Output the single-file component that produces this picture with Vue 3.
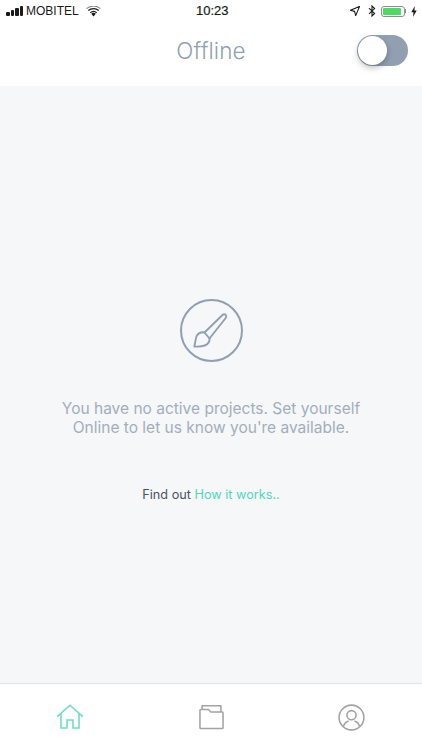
<template>
  <div class="screen">
    <header class="top">
      <div class="status-bar">
        <div class="status-left">
          <span class="signal"><i v-for="h in bars" :key="h" :style="{ height: h + 'px' }"></i></span>
          <span class="carrier">MOBITEL</span>
          <svg class="wifi" width="15" height="11" viewBox="0 0 15 11">
            <path d="M7.5 10.5 5.2 7.8a3.4 3.4 0 0 1 4.6 0z" fill="#1a1a1a" />
            <path d="M3.9 6.3a5.4 5.4 0 0 1 7.2 0l-.8.9a4.3 4.3 0 0 0-5.6 0z" fill="#1a1a1a" />
            <path d="M1.9 4.1a8.3 8.3 0 0 1 11.2 0l-.8.9a7.1 7.1 0 0 0-9.6 0z" fill="#1a1a1a" />
            <path d="M.3 2.3a10.7 10.7 0 0 1 14.4 0l-.6.7a9.7 9.7 0 0 0-13.2 0z" fill="#1a1a1a" opacity=".55" />
          </svg>
        </div>
        <span class="clock">10:23</span>
        <div class="status-right">
          <svg width="10" height="10" viewBox="0 0 10 10">
            <path d="M9.6.4 5.7 9.6 4.6 5.4.4 4.3z" fill="none" stroke="#1a1a1a" stroke-width="1.1" stroke-linejoin="round" />
          </svg>
          <svg class="bt" width="8" height="12" viewBox="0 0 8 12">
            <path d="M1 3.2 6.6 8.4 4 11V1l2.6 2.6L1 8.8" fill="none" stroke="#1a1a1a" stroke-width="1.1" />
          </svg>
          <span class="battery"><span class="charge"></span></span>
          <span class="battery-tip"></span>
          <svg width="6" height="11" viewBox="0 0 6 11">
            <path d="M3.8 0 .3 6.2h2.2L2 11l3.7-6.4H3.4z" fill="#1a1a1a" />
          </svg>
        </div>
      </div>
      <div class="title-row">
        <h1>Offline</h1>
        <button class="toggle" type="button" aria-label="Go online"><span class="knob"></span></button>
      </div>
    </header>

    <main class="body">
      <div class="brush-circle">
        <svg width="38" height="38" viewBox="0 0 38 38" fill="none" stroke="#929fb1" stroke-width="1.9" stroke-linejoin="round" stroke-linecap="round">
          <path d="M12.5 20.5 30.5 3c1-1 2.5-1 3.3 0 .7.9.6 2-.1 3L17.5 26.5" />
          <path d="M12.5 20.5c-3-.6-6 .6-7.6 3-1.4 2.2-1.5 7-2.6 11 3.8.2 7.5.2 10.5-1 3.3-1.4 5-4.5 4.7-7z" />
        </svg>
      </div>
      <p class="message">You have no active projects. Set yourself Online to let us know you're available.</p>
      <p class="find-out">Find out <a>How it works..</a></p>
    </main>

    <nav class="tabs">
      <button class="tab" type="button" aria-label="Home">
        <svg width="28" height="26" viewBox="0 0 28 26" fill="none" stroke="#6fdcc5" stroke-width="1.6">
          <path d="M1.2 12.6 14 1.2l12.8 11.4" />
          <path d="M5 9.6V24h6v-8h6v8h6V9.6" />
        </svg>
      </button>
      <button class="tab" type="button" aria-label="Projects">
        <svg width="25" height="26" viewBox="0 0 26 26" fill="none" stroke="#a3a3a3" stroke-width="1.6" stroke-linejoin="round">
          <path d="M3.2 5.2V1.4h19.6v6.4" />
          <path d="M1 6c0-.5.3-.8.8-.8h8l2.6 2.6h11.8c.5 0 .8.3.8.8v15.6c0 .5-.3.8-.8.8H1.8c-.5 0-.8-.3-.8-.8z" />
        </svg>
      </button>
      <button class="tab" type="button" aria-label="Profile">
        <svg width="27" height="27" viewBox="0 0 27 27" fill="none" stroke="#a3a3a3" stroke-width="1.6">
          <circle cx="13.5" cy="13.5" r="12.4" />
          <circle cx="13.5" cy="11.2" r="4.6" />
          <path d="M5.4 22.6c.8-3.2 2.8-4.8 5.2-5.6M21.6 22.6c-.8-3.2-2.8-4.8-5.2-5.6" />
        </svg>
      </button>
    </nav>
  </div>
</template>

<script setup>
const bars = [4, 6, 8, 10]
</script>

<style>
html,
body {
  margin: 0;
  background: #fff;
}
</style>

<style scoped>
.screen {
  width: 422px;
  height: 750px;
  display: flex;
  flex-direction: column;
  overflow: hidden;
  background: #fff;
  font-family: "Inter", "Open Sans", sans-serif;
}

.top {
  flex: 0 0 86px;
  background: #fff;
}

.status-bar {
  height: 22px;
  display: flex;
  align-items: center;
  justify-content: space-between;
  padding: 0 5px 0 6px;
  position: relative;
  color: #1a1a1a;
  font-family: "Liberation Sans", Arial, sans-serif;
  font-size: 12px;
}

.status-left,
.status-right {
  display: flex;
  align-items: center;
}

.signal {
  display: flex;
  align-items: flex-end;
  gap: 1px;
  margin-right: 3px;
}

.signal i {
  width: 3.5px;
  background: #1a1a1a;
  border-radius: 1px;
}

.wifi {
  margin-left: 7px;
}

.clock {
  position: absolute;
  left: 196px;
  top: 3px;
  font-size: 13px;
  -webkit-text-stroke: 0.2px #1a1a1a;
}

.status-right {
  gap: 3px;
}

.bt {
  margin-left: 5px;
}

.battery {
  width: 24px;
  height: 11px;
  margin-left: 2px;
  padding: 1px;
  box-sizing: border-box;
  border: 1px solid #8f8f8f;
  border-radius: 3px;
  display: flex;
}

.charge {
  width: 18px;
  background: #4cd964;
  border-radius: 1px;
}

.battery-tip {
  width: 1.5px;
  height: 4px;
  margin-left: -3px;
  margin-right: 2px;
  background: #8f8f8f;
}

.title-row {
  height: 58px;
  display: flex;
  align-items: center;
  justify-content: center;
  padding-bottom: 1px;
  box-sizing: border-box;
  position: relative;
}

h1 {
  margin: 0;
  font-size: 22.5px;
  line-height: 26px;
  font-weight: 300;
  color: #929fb1;
  letter-spacing: 0.1px;
}

.toggle {
  position: absolute;
  right: 14px;
  top: 13px;
  width: 51px;
  height: 31px;
  padding: 0;
  border: 0;
  border-radius: 16px;
  background: #929fb1;
}

.knob {
  position: absolute;
  left: 1px;
  top: 1px;
  width: 29px;
  height: 29px;
  border-radius: 50%;
  background: #fff;
  box-shadow: 0 3px 6px rgba(0, 0, 0, 0.25);
}

.body {
  flex: 1;
  display: flex;
  flex-direction: column;
  align-items: center;
  padding-top: 213px;
  background: #f5f7f9;
}

.brush-circle {
  width: 63px;
  height: 63px;
  box-sizing: border-box;
  border: 2px solid #929fb1;
  border-radius: 50%;
  display: flex;
  align-items: center;
  justify-content: center;
}

.message {
  width: 310px;
  margin: 37px 0 0;
  text-align: center;
  font-size: 15.5px;
  line-height: 19px;
  color: #a3aebc;
}

.find-out {
  margin: 49px 0 0;
  font-size: 12.7px;
  line-height: 18px;
  color: #4b5265;
}

.find-out a {
  color: #52d7bd;
}

.tabs {
  flex: 0 0 66px;
  display: flex;
  border-top: 1px solid #e3e3e5;
  background: #fff;
}

.tab {
  flex: 1;
  display: flex;
  align-items: center;
  justify-content: center;
  padding: 0;
  border: 0;
  background: none;
}
</style>
